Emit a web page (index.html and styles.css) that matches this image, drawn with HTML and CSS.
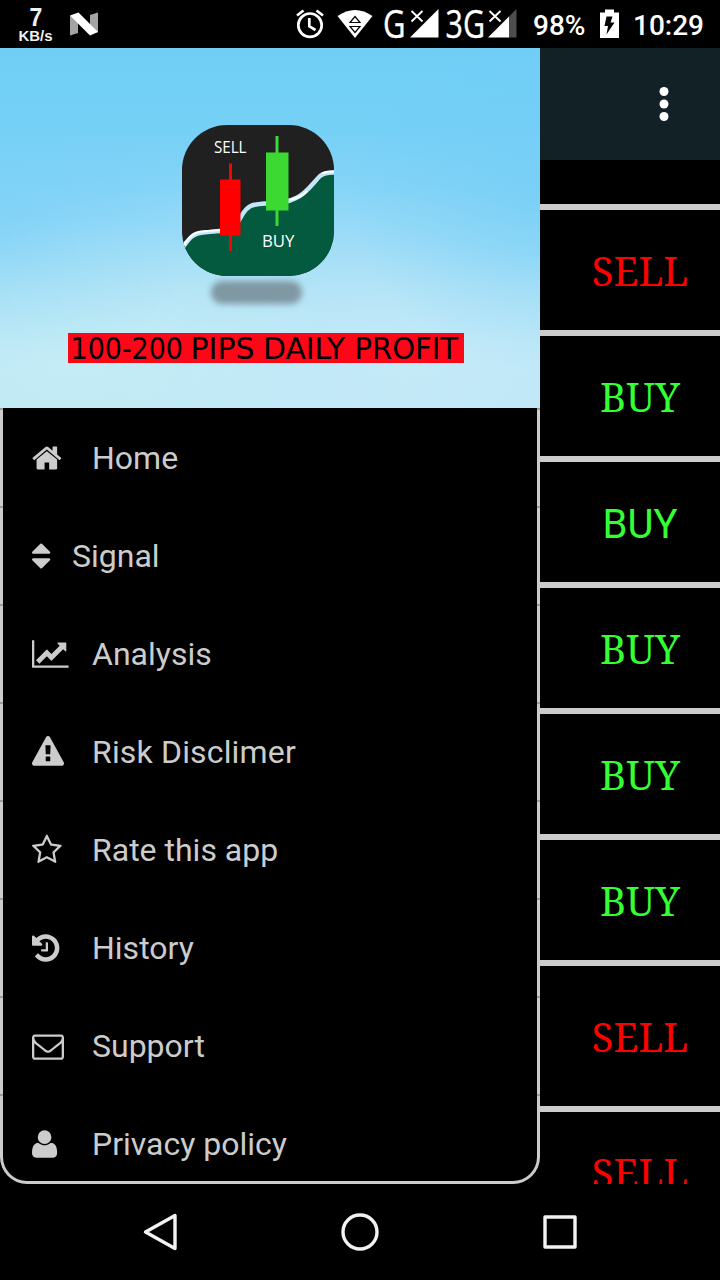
FILE: index.html
```html
<!DOCTYPE html>
<html lang="en">
<head>
<meta charset="utf-8">
<title>Forex signals</title>
<link rel="stylesheet" href="styles.css">
</head>
<body>
<div class="screen">
  <header class="status">
    <svg class="status-art" viewBox="0 0 720 48">
      <g class="speed">
        <text x="29.500" y="26" font-size="25.500" textLength="12.800" lengthAdjust="spacingAndGlyphs">7</text>
        <text x="18.500" y="40.500" font-size="14.500" textLength="34" lengthAdjust="spacingAndGlyphs">KB/s</text>
      </g>
      <path d="M70 16L78 13V33L70 35.500ZM90 15L98 12.500V32L90 34Z" fill="#a3a3a3"/>
      <path d="M70 15.500L78.500 12.500L98 32L90 35.500Z" fill="#fff"/>
      <g fill="none" stroke="#fff" stroke-width="2.700">
        <circle cx="310" cy="25.200" r="11.700"/>
        <path d="M309.300 18V26.300L315.500 30M297 15.500L303.500 10.500M316.500 10.500L323 15.500"/>
      </g>
      <path d="M337.500 16Q355 4 372.500 16L355 38Z" fill="#fff"/>
      <path d="M350 22.500L355 16.500L360 22.500ZM350 26.500H360L355 32.500Z" fill="none" stroke="#000" stroke-width="1.200"/>
      <g class="network">
        <text x="383" y="37.500" textLength="22.500" lengthAdjust="spacingAndGlyphs">G</text>
        <text x="445.500" y="37.500" textLength="39.500" lengthAdjust="spacingAndGlyphs">3G</text>
      </g>
      <path d="M410 37.500L438.500 9V37.500ZM488 37.500L509 16.500V37.500Z" fill="#fff"/>
      <path d="M509 16.500L516.500 9V37.500H509Z" fill="#4d4d4d"/>
      <path d="M411.500 11L422.500 21.500M422.500 11L411.500 21.500M489.500 11L500.500 21.500M500.500 11L489.500 21.500" stroke="#fff" stroke-width="1.900"/>
      <g class="status-text">
        <text x="533" y="35" textLength="52.500" lengthAdjust="spacingAndGlyphs">98%</text>
        <text x="633" y="35" textLength="71" lengthAdjust="spacingAndGlyphs">10:29</text>
      </g>
      <path d="M600 12.500H605V9.500H614V12.500H619V38H600Z" fill="#fff"/>
      <path d="M606.500 16.500H612.500L610.500 22.500H614.500L606.500 34.500L608 26H604.500Z" fill="#000"/>
    </svg>
  </header>

  <main class="app">
    <nav class="drawer">
      <div class="banner">
        <svg class="banner-art" viewBox="0 48 540 360">
          <defs>
            <clipPath id="tile"><rect x="182" y="125" width="152" height="151" rx="45"/></clipPath>
            <filter id="soft" x="-20%" y="-50%" width="140%" height="200%"><feGaussianBlur stdDeviation="3"/></filter>
          </defs>
          <rect x="211" y="281" width="91" height="23" rx="11.500" fill="#7f98a3" filter="url(#soft)"/>
          <g clip-path="url(#tile)">
            <rect x="182" y="125" width="152" height="151" fill="#202020"/>
            <path d="M183 247C190 237 194 233 203 232.500C214 231 224 232 233 228C241 222 242 206 256 204.500C270 202 283 205 296 198C306 194 313 183 320 176Q325 172 335 172.500V280H183Z" fill="#045a3e"/>
            <path d="M183 247C190 237 194 233 203 232.500C214 231 224 232 233 228C241 222 242 206 256 204.500C270 202 283 205 296 198C306 194 313 183 320 176Q325 172 335 172.500" fill="none" stroke="#c3e7f9" stroke-width="4.400"/>
            <path d="M183 246C190 236 194 232 203 231.500L220 230M289 200Q301 198 307 191M322 173.500Q326 171.500 335 171.500" fill="none" stroke="#fff" stroke-width="2.200"/>
          </g>
          <path d="M229 163.500H232V179.500H240.500V235.500H232V251H229V235.500H220V179.500H229Z" fill="#fe0000"/>
          <path d="M275.500 136H278.500V152.500H288.500V210.500H278.500V226H275.500V210.500H266V152.500H275.500Z" fill="#3bd932"/>
          <g class="logo-text">
            <text x="214" y="153.300" textLength="32.500" lengthAdjust="spacingAndGlyphs">SELL</text>
            <text x="262" y="247.300" textLength="32.500" lengthAdjust="spacingAndGlyphs">BUY</text>
          </g>
          <rect x="68" y="333" width="396" height="30" fill="#fc0718"/>
          <g class="slogan">
            <text x="70.500" y="359" textLength="112.500" lengthAdjust="spacingAndGlyphs">100-200</text>
            <text x="190.500" y="359" textLength="64" lengthAdjust="spacingAndGlyphs">PIPS</text>
            <text x="263" y="359" textLength="82" lengthAdjust="spacingAndGlyphs">DAILY</text>
            <text x="354.500" y="359" textLength="103.500" lengthAdjust="spacingAndGlyphs">PROFIT</text>
          </g>
        </svg>
      </div>
      <div class="menu-frame">
        <ul class="menu">
          <li class="item"><svg class="icon" preserveAspectRatio="xMinYMid meet" viewBox="64 0 1792 1792"><path d="M1472 992v480q0 26-19 45t-45 19h-384v-384h-256v384h-384q-26 0-45-19t-19-45v-480q0-1 .5-3t.5-3l575-474 575 474q1 2 1 6zm223-69l-62 74q-8 9-21 11h-3q-13 0-21-7l-692-577-692 577q-12 8-24 7-13-2-21-11l-62-74q-8-10-7-23.500t11-21.500l719-599q32-26 76-26t76 26l244 204v-195q0-14 9-23t23-9h192q14 0 23 9t9 23v408l219 182q10 8 11 21.500t-7 23.500z"/></svg><span>Home</span></li>
          <li class="item"><svg class="icon icon-narrow" preserveAspectRatio="xMinYMid meet" viewBox="384 0 1344 1792"><path d="M1408 1088q0 26-19 45l-448 448q-19 19-45 19t-45-19l-448-448q-19-19-19-45t19-45 45-19h896q26 0 45 19t19 45zm0-384q0 26-19 45t-45 19h-896q-26 0-45-19t-19-45 19-45l448-448q19-19 45-19t45 19l448 448q19 19 19 45z"/></svg><span>Signal</span></li>
          <li class="item"><svg class="icon" preserveAspectRatio="xMinYMid meet" viewBox="0 0 2048 1792"><path d="M2048 1536v128h-2048v-1536h128v1408h1920zm-128-1248v435q0 21-19.500 29.500t-35.500-7.500l-121-121-633 633q-10 10-23 10t-23-10l-233-233-416 416-192-192 585-585q10-10 23-10t23 10l233 233 464-464-121-121q-16-16-7.500-35.500t29.500-19.500h435q14 0 23 9t9 23z"/></svg><span>Analysis</span></li>
          <li class="item"><svg class="icon" preserveAspectRatio="xMinYMid meet" viewBox="0 0 1792 1792"><path d="M1024 1375v-190q0-14-9.500-23.500t-22.500-9.500h-192q-13 0-22.500 9.500t-9.500 23.500v190q0 14 9.500 23.500t22.500 9.500h192q13 0 22.500-9.500t9.500-23.500zm-2-374l18-459q0-12-10-19-13-11-24-11h-220q-11 0-24 11-10 7-10 21l17 457q0 10 10 16.500t24 6.500h185q14 0 23.500-6.500t10.500-16.500zm-14-934l768 1408q35 63-2 126-17 29-46.500 46t-63.500 17h-1536q-34 0-63.500-17t-46.500-46q-37-63-2-126l768-1408q17-31 47-49t65-18 65 18 47 49z"/></svg><span class="wide">Risk Disclimer</span></li>
          <li class="item"><svg class="icon" preserveAspectRatio="xMinYMid meet" viewBox="64 0 1792 1792"><path d="M1201 1004l306-297-422-62-189-382-189 382-422 62 306 297-73 421 378-199 377 199zm527-357q0 22-26 48l-363 354 86 500q1 7 1 20 0 50-41 50-19 0-40-12l-449-236-449 236q-22 12-40 12-21 0-31.500-14.500t-10.500-35.500q0-6 2-20l86-500-364-354q-25-27-25-48 0-37 56-46l502-73 225-455q19-41 49-41t49 41l225 455 502 73q56 9 56 46z"/></svg><span>Rate this app</span></li>
          <li class="item"><svg class="icon" preserveAspectRatio="xMinYMid meet" viewBox="128 0 1792 1792"><path d="M1664 896q0 156-61 298t-164 245-245 164-298 61q-172 0-327-72.500t-264-204.500q-7-10-6.500-22.500t8.500-20.500l137-138q10-9 25-9 16 2 23 12 73 95 179 147t225 52q104 0 198.500-40.500t163.500-109.500 109.500-163.500 40.500-198.500-40.500-198.500-109.500-163.500-163.500-109.500-198.500-40.500q-98 0-188 35.500t-160 101.500l137 138q31 30 14 69-17 40-59 40h-448q-26 0-45-19t-19-45v-448q0-42 40-59 39-17 69 14l130 129q107-101 244.500-156.500t284.500-55.500q156 0 298 61t245 164 164 245 61 298zm-640-288v448q0 14-9 23t-23 9h-320q-14 0-23-9t-9-23v-64q0-14 9-23t23-9h224v-352q0-14 9-23t23-9h64q14 0 23 9t9 23z"/></svg><span>History</span></li>
          <li class="item"><svg class="icon" preserveAspectRatio="xMinYMid meet" viewBox="0 0 1792 1792"><path d="M1664 1504v-768q-32 36-69 66-268 206-426 338-51 43-83 67t-86.500 48.500-102.500 24.500h-2q-48 0-102.500-24.500t-86.500-48.500-83-67q-158-132-426-338-37-30-69-66v768q0 13 9.500 22.500t22.500 9.500h1472q13 0 22.500-9.500t9.500-22.500zm0-1051v-24.500l-.5-13-3-12.500-5.500-9-9-7.500-14-2.500h-1472q-13 0-22.500 9.500t-9.500 22.500q0 168 147 284 193 152 401 317 6 5 35 29.500t46 37.500 44.500 31.500 50.500 27.500 43 9h2q20 0 43-9t50.500-27.500 44.500-31.500 46-37.500 35-29.500q208-165 401-317 54-43 100.500-115.500t46.500-131.500zm128-37v1088q0 66-47 113t-113 47h-1472q-66 0-113-47t-47-113v-1088q0-66 47-113t113-47h1472q66 0 113 47t47 113z"/></svg><span>Support</span></li>
          <li class="item"><svg class="icon" preserveAspectRatio="xMinYMid meet" viewBox="192 0 1792 1792"><path d="M1600 1405q0 120-73 189.500t-194 69.500h-874q-121 0-194-69.500t-73-189.500q0-53 3.500-103.500t14-109 26.500-108.500 43-97.500 62-81 85.500-53.500 111.500-20q9 0 42 21.500t74.500 48 108 48 133.500 21.500 133.500-21.500 108-48 74.500-48 42-21.500q61 0 111.500 20t85.500 53.500 62 81 43 97.500 26.500 108.500 14 109 3.500 103.500zm-320-893q0 159-112.500 271.500t-271.500 112.500-271.500-112.500-112.500-271.500 112.500-271.500 271.500-112.500 271.500 112.500 112.500 271.500z"/></svg><span>Privacy policy</span></li>
        </ul>
      </div>
    </nav>

    <section class="content">
      <div class="toolbar">
        <svg class="more" viewBox="0 0 12 36"><circle cx="6" cy="5.500" r="4.500"/><circle cx="6" cy="18" r="4.500"/><circle cx="6" cy="30.500" r="4.500"/></svg>
      </div>
      <div class="viewport">
        <div class="signals">
          <div class="signal sell">SELL</div>
          <div class="signal sell">SELL</div>
          <div class="signal buy">BUY</div>
          <div class="signal buy plain">BUY</div>
          <div class="signal buy">BUY</div>
          <div class="signal buy">BUY</div>
          <div class="signal buy">BUY</div>
          <div class="signal sell tall">SELL</div>
          <div class="signal sell">SELL</div>
        </div>
      </div>
    </section>
  </main>

  <footer class="softkeys">
    <svg class="key" viewBox="0 0 40 40"><path d="M5.500 20L35 3.500V36.500Z"/></svg>
    <svg class="key" viewBox="0 0 40 40"><circle cx="20" cy="20" r="17"/></svg>
    <svg class="key" viewBox="0 0 40 40"><rect x="5" y="5" width="30" height="30"/></svg>
  </footer>
</div>
</body>
</html>
```
FILE: styles.css
```css
* { box-sizing: border-box; }
body { margin: 0; background: #000; font-family: Roboto, sans-serif; }
svg { display: block; }

.screen {
  width: 720px;
  height: 1280px;
  display: grid;
  grid-template-rows: 48px 1136px 96px;
  overflow: hidden;
  background: #000;
}

.status-art { width: 720px; height: 48px; }
.speed { fill: #f0f0f0; font-family: "Liberation Sans", sans-serif; font-weight: 700; }
.network {
  fill: #fff;
  stroke: #fff;
  stroke-width: 0.4px;
  font-family: "Open Sans", sans-serif;
  font-size: 37.5px;
}
.status-text { fill: #fff; font-family: Roboto, sans-serif; font-size: 28px; font-weight: 500; }

.app { display: grid; grid-template-columns: 540px 180px; min-height: 0; }
.drawer { display: grid; grid-template-rows: 360px 776px; }

.banner {
  background:
    radial-gradient(ellipse 260px 150px at 14% 88%, rgba(205, 241, 245, 0.45), rgba(205, 241, 245, 0)),
    radial-gradient(ellipse 300px 140px at 75% 92%, rgba(205, 236, 250, 0.45), rgba(205, 236, 250, 0)),
    radial-gradient(ellipse 200px 130px at 0% 52%, rgba(118, 206, 247, 0.6), rgba(118, 206, 247, 0)),
    radial-gradient(ellipse 190px 170px at 100% 42%, rgba(112, 204, 246, 0.6), rgba(112, 204, 246, 0)),
    linear-gradient(#70cef5 0%, #75d0f6 22%, #84d4f7 38%, #9ddcf7 53%, #b1e3f6 68%, #bce8f6 82%, #bce7f7 100%);
}
.banner-art { width: 540px; height: 360px; }
.logo-text { fill: #fff; font-family: "Open Sans", sans-serif; font-size: 16.5px; }
.slogan { fill: #000; font-family: "DejaVu Sans Condensed", "DejaVu Sans", sans-serif; font-size: 31px; }

.menu-frame {
  padding: 0 3px 3px;
  border-radius: 0 0 27px 27px;
  background: repeating-linear-gradient(#9c9c9c 0 2px, #ccc 2px 98px);
}
.menu {
  height: 773px;
  margin: 0;
  padding: 0 0 0 29px;
  list-style: none;
  overflow: hidden;
  border-radius: 0 0 24px 24px;
  background: #000;
}
.item {
  display: flex;
  align-items: center;
  height: 98px;
  color: #ccc;
  font-size: 32px;
  line-height: 38px;
}
.item span { margin-top: 1px; white-space: nowrap; }
.item .wide { letter-spacing: 0.16px; }
.icon {
  flex: none;
  width: 60px;
  height: 32px;
  margin-top: 1px;
  fill: #ccc;
}
.icon-narrow { width: 40px; }

.content { display: grid; grid-template-rows: 112px 1024px; }
.toolbar {
  display: flex;
  align-items: center;
  justify-content: flex-end;
  padding-right: 50px;
  background: #122126;
}
.more { width: 12px; height: 36px; fill: #fff; }
.viewport { overflow: hidden; background: #000; }
.signals { margin-top: -76px; }
.signal {
  display: flex;
  align-items: center;
  justify-content: center;
  height: 126px;
  padding-top: 2px;
  padding-left: 20px;
  border-bottom: 6px solid #ccc;
  font-family: "Noto Serif", "DejaVu Serif Condensed", "DejaVu Serif", serif;
  font-stretch: condensed;
  font-size: 40px;
  line-height: 46px;
}
.sell { color: #f00; }
.buy { color: #3f3; }
.plain { padding-top: 6px; font-family: Roboto, sans-serif; font-stretch: normal; }
.tall { height: 146px; }

.softkeys {
  display: flex;
  align-items: center;
  justify-content: center;
  gap: 160px;
}
.key {
  width: 40px;
  height: 40px;
  fill: none;
  stroke: #f2f2f2;
  stroke-width: 3.4;
  stroke-linejoin: round;
}
```
